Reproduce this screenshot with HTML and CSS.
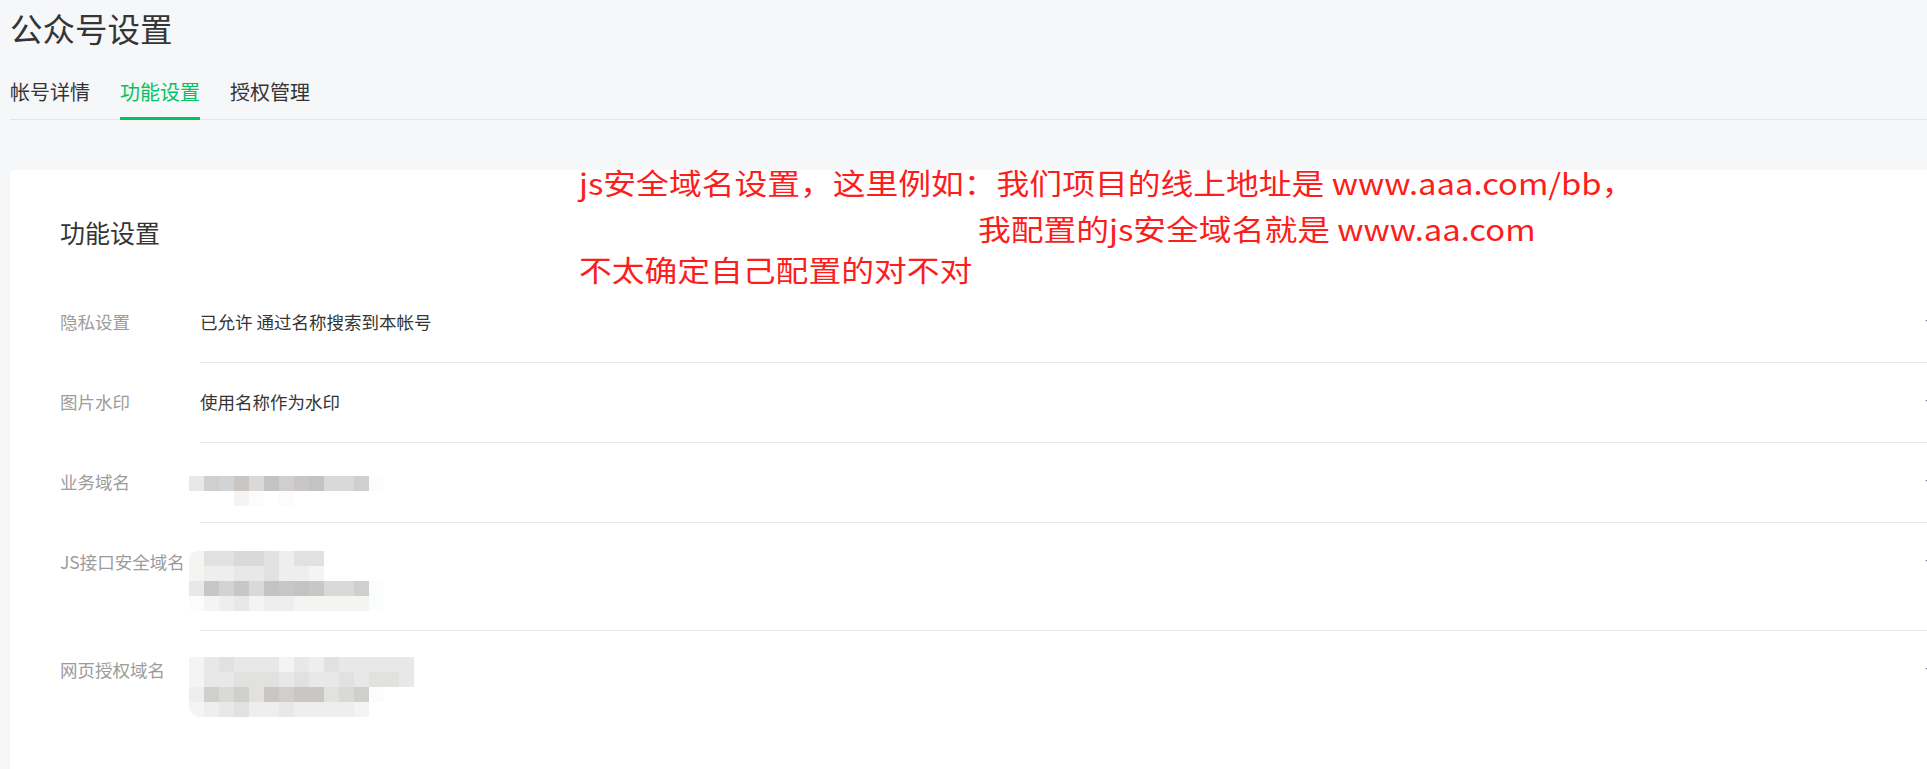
FILE: index.html
```html
<!DOCTYPE html>
<html lang="zh-CN">
<head>
<meta charset="utf-8">
<title>公众号设置</title>
<link rel="stylesheet" href="styles.css">
</head>
<body>
<div class="page">
  <h1 class="page-title">公众号设置</h1>
  <nav class="tabs">
    <a class="tab">帐号详情</a>
    <a class="tab active">功能设置</a>
    <a class="tab">授权管理</a>
  </nav>

  <section class="card">
    <h2 class="card-title">功能设置</h2>

    <div class="row">
      <div class="label">隐私设置</div>
      <div class="content">
        <div class="value">已允许 通过名称搜索到本帐号</div>
        <a class="action">设置</a>
      </div>
    </div>

    <div class="row">
      <div class="label">图片水印</div>
      <div class="content">
        <div class="value">使用名称作为水印</div>
        <a class="action">设置</a>
      </div>
    </div>

    <div class="row">
      <div class="label">业务域名</div>
      <div class="content">
        <div class="mosaic one">
          <div class="mgrid off-a">
            <div class="mline"><i class="c"></i><i class="f"></i><i class="fb"></i><i class="g"></i><i class="e"></i><i class="h"></i><i class="f"></i><i class="g"></i><i class="h"></i><i class="e"></i><i class="e"></i><i class="f"></i><i class="w"></i></div>
            <div class="mline"><i class="n"></i><i class="n"></i><i class="n"></i><i class="a"></i><i class="w"></i><i class="n"></i><i class="w"></i></div>
          </div>
        </div>
        <a class="action">设置</a>
      </div>
    </div>

    <div class="row">
      <div class="label">JS接口安全域名</div>
      <div class="content">
        <div class="mosaic two">
          <div class="mgrid off-b">
            <div class="mline round-tl"><i class="a"></i><i class="d"></i><i class="d"></i><i class="e"></i><i class="e"></i><i class="d"></i><i class="b"></i><i class="d"></i><i class="d"></i></div>
            <div class="mline"><i class="a"></i><i class="b"></i><i class="b"></i><i class="c"></i><i class="c"></i><i class="d"></i><i class="b"></i><i class="b"></i><i class="a"></i></div>
            <div class="mline"><i class="c"></i><i class="g"></i><i class="fb"></i><i class="g"></i><i class="e"></i><i class="h"></i><i class="g"></i><i class="h"></i><i class="g"></i><i class="e"></i><i class="e"></i><i class="f"></i><i class="w"></i></div>
            <div class="mline"><i class="w"></i><i class="a"></i><i class="b"></i><i class="c"></i><i class="a"></i><i class="b"></i><i class="b"></i><i class="a"></i><i class="a"></i><i class="a"></i><i class="a"></i><i class="a"></i><i class="w"></i></div>
          </div>
        </div>
        <a class="action">设置</a>
      </div>
    </div>

    <div class="row last">
      <div class="label">网页授权域名</div>
      <div class="content">
        <div class="mosaic two">
          <div class="mgrid off-c">
            <div class="mline"><i class="a"></i><i class="c"></i><i class="d"></i><i class="c"></i><i class="c"></i><i class="c"></i><i class="a"></i><i class="c"></i><i class="b"></i><i class="d"></i><i class="c"></i><i class="c"></i><i class="c"></i><i class="c"></i><i class="c"></i></div>
            <div class="mline"><i class="a"></i><i class="c"></i><i class="c"></i><i class="d"></i><i class="d"></i><i class="d"></i><i class="c"></i><i class="d"></i><i class="c"></i><i class="c"></i><i class="d"></i><i class="c"></i><i class="d"></i><i class="d"></i><i class="c"></i></div>
            <div class="mline"><i class="b"></i><i class="f"></i><i class="e"></i><i class="f"></i><i class="d"></i><i class="g"></i><i class="f"></i><i class="g"></i><i class="g"></i><i class="d"></i><i class="e"></i><i class="f"></i><i class="w"></i></div>
            <div class="mline round-bl"><i class="a"></i><i class="b"></i><i class="c"></i><i class="d"></i><i class="b"></i><i class="b"></i><i class="c"></i><i class="b"></i><i class="b"></i><i class="b"></i><i class="b"></i><i class="a"></i></div>
          </div>
        </div>
        <a class="action">设置</a>
      </div>
    </div>
  </section>

  <div class="note">
    <div class="note-line l1">js安全域名设置，这里例如：我们项目的线上地址是 www.aaa.com/bb，</div>
    <div class="note-line l2">我配置的js安全域名就是 www.aa.com</div>
    <div class="note-line l3">不太确定自己配置的对不对</div>
  </div>
</div>
</body>
</html>
```

FILE: styles.css
```css
html, body {
  margin: 0;
  overflow: hidden;
}

body {
  background: #f6f7f9;
  font-family: "Noto Sans CJK SC", "Noto Sans", sans-serif;
  color: #353535;
}

.page {
  position: relative;
  padding-left: 10px;
}

.page-title {
  margin: 0;
  padding-top: 5px;
  font-size: 32.5px;
  line-height: 45px;
  font-weight: 400;
  color: #353535;
}

.tabs {
  display: flex;
  gap: 30px;
  margin-top: 28px;
  border-bottom: 1px solid #e2e4e7;
}

.tab {
  position: relative;
  font-size: 20px;
  line-height: 28px;
  padding-bottom: 12.5px;
  color: #353535;
  cursor: pointer;
}

.tab.active {
  color: #07c160;
}

.tab.active::after {
  content: "";
  position: absolute;
  left: 0;
  right: 0;
  bottom: -1px;
  height: 3px;
  background: #07c160;
}

.card {
  box-sizing: border-box;
  width: 2000px;
  margin-top: 50px;
  padding: 45.5px 50px 60px;
  background: #fff;
  border-radius: 4px;
}

.card-title {
  margin: 0 0 32.5px;
  font-size: 25px;
  line-height: 35px;
  font-weight: 400;
  color: #353535;
}

.row {
  display: flex;
  align-items: flex-start;
}

.label {
  flex: none;
  width: 140px;
  padding: 25.5px 0;
  font-size: 17.5px;
  line-height: 28px;
  color: #9c9c9c;
}

.content {
  flex: 1;
  display: flex;
  justify-content: space-between;
  align-items: flex-start;
  padding: 25.5px 0;
  border-bottom: 1px solid #e6e6e6;
}

.row.last .content {
  border-bottom: none;
}

.value {
  font-size: 17.5px;
  line-height: 28px;
  color: #353535;
}

.action {
  font-size: 17.5px;
  line-height: 28px;
  color: #576b95;
  cursor: pointer;
}

/* blurred (pixelated) values */
.mosaic {
  margin-left: -11px;
}

.mosaic.one {
  height: 28px;
}

.mosaic.two {
  height: 56px;
}

.mgrid.off-a { padding-top: 7.5px; }
.mgrid.off-b { padding-top: 2.5px; }
.mgrid.off-c { padding-top: 0.5px; }

.mline {
  display: flex;
}

.mline i {
  display: block;
  width: 15px;
  height: 15px;
}

.mline.round-tl i:first-child { border-top-left-radius: 9px; }
.mline.round-bl i:first-child { border-bottom-left-radius: 12px; }

.n { background: transparent; }
.w { background: #fafcfe; }
.a { background: #f4f4f3; }
.b { background: #eeeeee; }
.c { background: #e8e8e8; }
.d { background: #e1e1e0; }
.e { background: #d9d9d8; }
.f { background: #d0cfce; }
.fb { background: #d1d3d7; }
.g { background: #c9c6c5; }
.h { background: #c3c3c3; }

/* red annotation drawn over the screenshot */
.note {
  position: absolute;
  left: 579px;
  top: 162px;
  font-size: 29px;
  line-height: 41px;
  color: #fc1d1d;
  white-space: nowrap;
  transform: scaleX(1.13);
  transform-origin: left top;
}

.note-line.l1 {
  margin-bottom: 5px;
}

.note-line.l2 {
  padding-left: 353px;
}
```
